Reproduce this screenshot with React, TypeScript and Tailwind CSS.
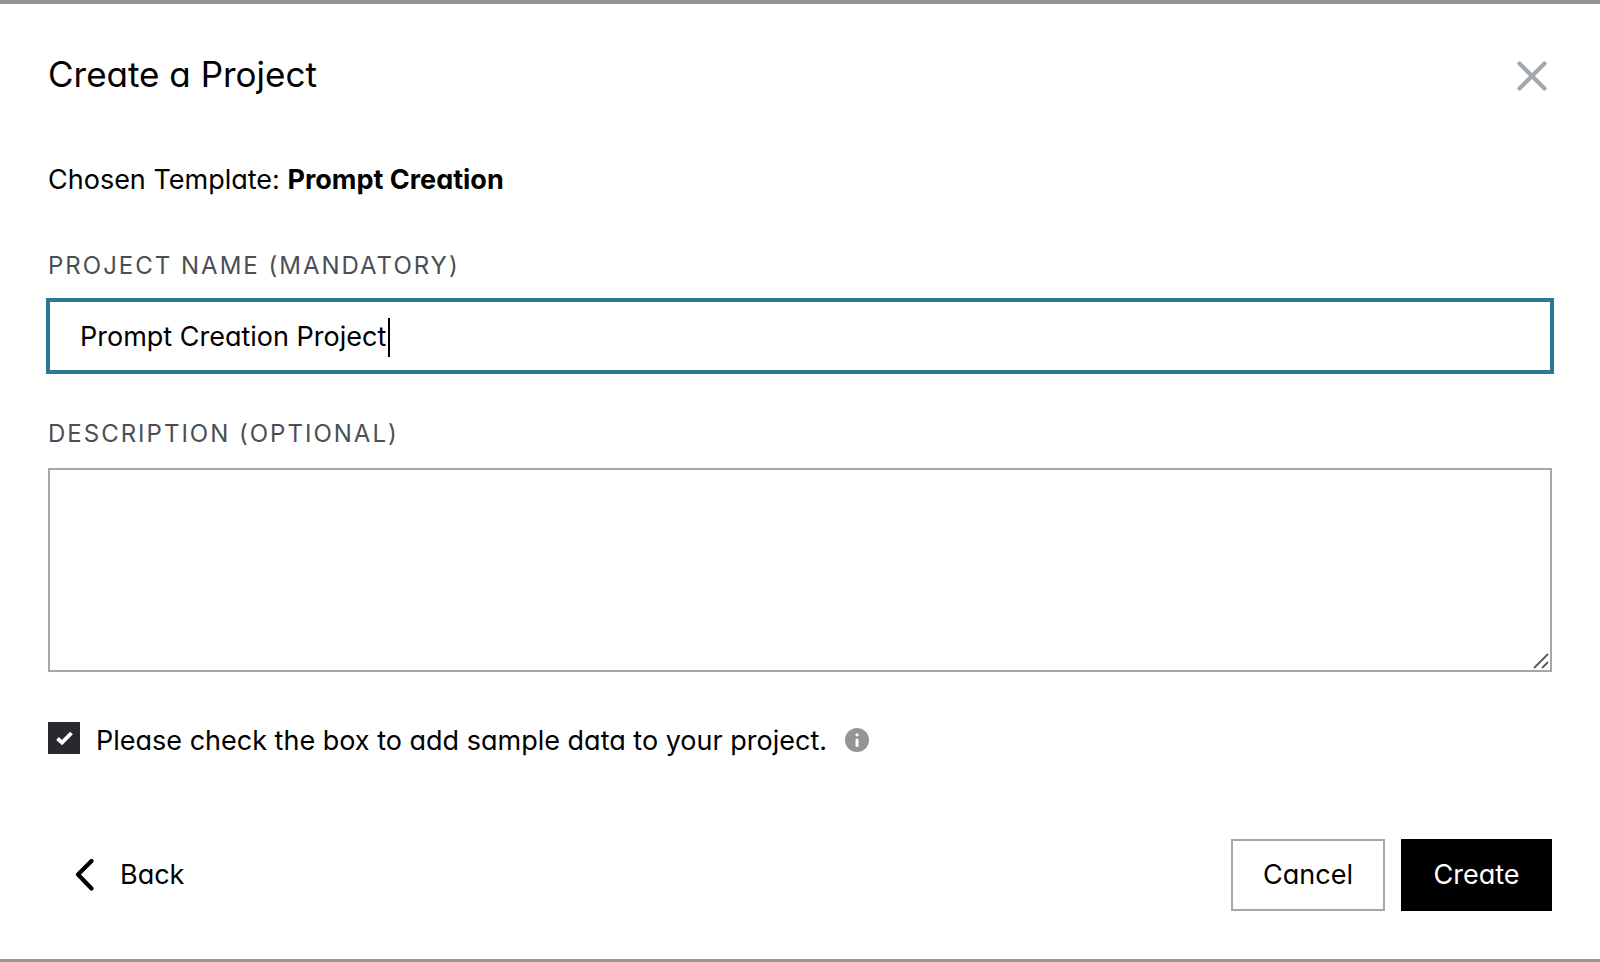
import { useState } from "react";

const label = "text-2xl leading-8 tracking-[2px] uppercase text-[#4b4f54]";
const button = "flex h-[72px] items-center justify-center border-2 px-[30px] text-[27px] leading-8";

function CloseIcon() {
  return (
    <svg width="32" height="32" viewBox="0 0 32 32" fill="none" stroke="#a2a9ad" strokeWidth="4.2" strokeLinecap="round">
      <path d="M3.5 3.5l25 25M28.5 3.5l-25 25" />
    </svg>
  );
}

function BackIcon() {
  return (
    <svg width="20" height="32" viewBox="0 0 20 32" fill="none" stroke="currentColor" strokeWidth="4.2" strokeLinecap="round" strokeLinejoin="round">
      <path d="M17.5 2L4 15.5l13.5 14" />
    </svg>
  );
}

function InfoIcon() {
  return (
    <svg width="24" height="24" viewBox="0 0 24 24">
      <circle cx="12" cy="12" r="12" fill="#939597" />
      <circle cx="12" cy="6.8" r="1.6" fill="#fff" />
      <path d="M12 12v5.5" stroke="#fff" strokeWidth="3" strokeLinecap="round" />
    </svg>
  );
}

export default function App() {
  const [name, setName] = useState("Prompt Creation Project");
  const [description, setDescription] = useState("");
  const [sample, setSample] = useState(true);

  return (
    <div className="min-h-screen border-t-4 border-b-3 border-t-[#8f9497] border-b-[#999797] bg-white px-12 pb-12 font-['Inter',sans-serif] text-black [font-feature-settings:'cv11']">
      <header className="flex items-center justify-between pt-12">
        <h1 className="text-[35px] leading-[44px]">Create a Project</h1>
        <button type="button" aria-label="Close" className="mt-1 mr-1">
          <CloseIcon />
        </button>
      </header>

      <form onSubmit={(e) => e.preventDefault()}>
        <p className="mt-17 text-[27px] leading-8">
          Chosen Template: <strong className="font-bold">Prompt Creation</strong>
        </p>

        <label htmlFor="name" className={`mt-[54px] block ${label}`}>
          Project name (mandatory)
        </label>
        <div className="relative mt-[18px]">
          <input
            id="name"
            value={name}
            onChange={(e) => setName(e.target.value)}
            className="block h-[72px] w-full border-2 border-[#2f7691] px-[30px] text-[27px] leading-8 ring-2 ring-[#2f7691] outline-none"
          />
          <span className="absolute top-[18px] left-[340px] h-[39px] w-0.5 bg-black" />
        </div>

        <label htmlFor="description" className={`mt-[46px] block ${label}`}>
          Description (optional)
        </label>
        <textarea
          id="description"
          value={description}
          onChange={(e) => setDescription(e.target.value)}
          className="mt-[18px] block h-[204px] w-full resize-none border-2 border-[#a2a9ad] px-[30px] py-4 text-[27px] leading-8 outline-none"
        />
        {/* resize grip */}
        <div className="relative">
          <svg className="pointer-events-none absolute right-[3px] bottom-[3px]" width="16" height="16" viewBox="0 0 16 16" stroke="#5b5b5b" strokeWidth="1.8" fill="none">
            <path d="M1 15L15 1M9 15l6-6" />
          </svg>
        </div>

        <div className="mt-[50px] flex items-start">
          <span className="relative flex size-8">
            <input
              id="sample"
              type="checkbox"
              checked={sample}
              onChange={(e) => setSample(e.target.checked)}
              className="size-8 appearance-none border-2 border-[#27292c] checked:bg-[#27292c]"
            />
            {sample && (
              <svg className="pointer-events-none absolute inset-0" width="32" height="32" viewBox="0 0 32 32" fill="none" stroke="#fff" strokeWidth="3.8">
                <path d="M9.5 16.5l4.5 4.2L23.5 11" />
              </svg>
            )}
          </span>
          <label htmlFor="sample" className="ml-4 text-[27px] leading-[38px]">
            Please check the box to add sample data to your project.
          </label>
          <button type="button" aria-label="More information" className="ml-[18px] flex h-9 items-center">
            <InfoIcon />
          </button>
        </div>

        <footer className="mt-[79px] flex items-center justify-between">
          <button type="button" className="flex items-center gap-[26px] pl-[26px] text-[27px] leading-8">
            <BackIcon />
            Back
          </button>
          <div className="flex gap-4">
            <button type="button" className={`min-w-[154px] border-[#a2a9ad] ${button}`}>
              Cancel
            </button>
            <button type="submit" className={`min-w-[151px] border-black bg-black text-white ${button}`}>
              Create
            </button>
          </div>
        </footer>
      </form>
    </div>
  );
}
